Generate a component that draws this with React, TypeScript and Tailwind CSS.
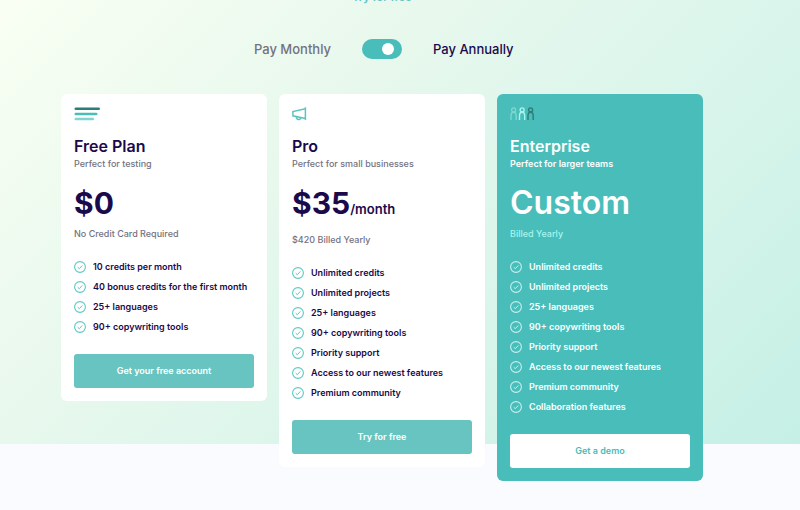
import { useState } from "react";
import type { ReactNode } from "react";

type Plan = {
  name: string;
  tagline: string;
  price: string;
  period?: string;
  billing: string;
  features: string[];
  action: string;
  icon: ReactNode;
  featured?: boolean;
};

function BarsIcon() {
  return (
    <svg width="26" height="14" viewBox="0 0 26 14" aria-hidden="true" strokeWidth="2.6" strokeLinecap="round">
      <path d="M1.8 1.8H24.7" stroke="#2b7d77" />
      <path d="M1.8 7H22.2" stroke="#4abdb9" />
      <path d="M1.8 12H18.7" stroke="#7fd6d0" />
    </svg>
  );
}

function MegaphoneIcon() {
  return (
    <svg width="15" height="14" viewBox="0 0 15 14" aria-hidden="true" fill="none" stroke="#5cc5c0" strokeWidth="1.5">
      <path d="M13.4 0.2V13M13.4 1.7L0.9 4.6V8.8L13.4 11.6" />
      <path d="M4.4 9.8C4.4 13.2 8.6 13.4 8.6 10.8" />
    </svg>
  );
}

function PeopleIcon() {
  return (
    <svg width="26" height="14" viewBox="0 0 26 14" aria-hidden="true" fill="none" strokeWidth="1.4">
      {["#7fd6d0", "#a9f5ee", "#2b7d77"].map((color, i) => (
        <g key={color} stroke={color} transform={`translate(${i * 8.5} 0)`}>
          <circle cx="3.6" cy="2.9" r="2" />
          <path d="M1 13V8.8C1 6.8 2.2 5.2 3.6 5.2S6.2 6.8 6.2 8.8V13" />
        </g>
      ))}
    </svg>
  );
}

function CheckIcon({ featured }: { featured?: boolean }) {
  return (
    <svg
      width="12"
      height="12"
      viewBox="0 0 12 12"
      aria-hidden="true"
      fill="none"
      stroke={featured ? "#c9efec" : "#5cc8c3"}
      className="shrink-0"
    >
      <circle cx="6" cy="6" r="5.4" strokeWidth="1.1" />
      <path d="M3.7 6.2L5.3 7.7L8.3 4.4" strokeWidth="1" />
    </svg>
  );
}

const plans: Plan[] = [
  {
    name: "Free Plan",
    tagline: "Perfect for testing",
    price: "$0",
    billing: "No Credit Card Required",
    features: [
      "10 credits per month",
      "40 bonus credits for the first month",
      "25+ languages",
      "90+ copywriting tools",
    ],
    action: "Get your free account",
    icon: <BarsIcon />,
  },
  {
    name: "Pro",
    tagline: "Perfect for small businesses",
    price: "$35",
    period: "/month",
    billing: "$420 Billed Yearly",
    features: [
      "Unlimited credits",
      "Unlimited projects",
      "25+ languages",
      "90+ copywriting tools",
      "Priority support",
      "Access to our newest features",
      "Premium community",
    ],
    action: "Try for free",
    icon: <MegaphoneIcon />,
  },
  {
    name: "Enterprise",
    tagline: "Perfect for larger teams",
    price: "Custom",
    billing: "Billed Yearly",
    features: [
      "Unlimited credits",
      "Unlimited projects",
      "25+ languages",
      "90+ copywriting tools",
      "Priority support",
      "Access to our newest features",
      "Premium community",
      "Collaboration features",
    ],
    action: "Get a demo",
    icon: <PeopleIcon />,
    featured: true,
  },
];

function PlanCard({ plan }: { plan: Plan }) {
  const { featured } = plan;
  return (
    <article
      className={`flex flex-col rounded-md p-[13px] ${
        featured ? "bg-[#48bdba] text-white" : "bg-white text-[#1b0a4b]"
      }`}
    >
      {plan.icon}
      <h2 className="mt-[14px] text-base leading-[22px] font-semibold">{plan.name}</h2>
      <p className={`text-[9px] leading-[14px] ${featured ? "font-semibold text-white" : "font-medium text-[#73727f]"}`}>
        {plan.tagline}
      </p>
      <p className={`mt-3 leading-10 ${featured ? "text-[32px] font-semibold" : "text-[30px] font-bold"}`}>
        {plan.price}
        {plan.period && <span className="text-[13px] leading-none font-semibold">{plan.period}</span>}
      </p>
      <p
        className={`text-[9px] leading-[14px] font-medium ${plan.period ? "mt-[10px]" : "mt-1"} ${
          featured ? "text-[#a9f5ee]" : "text-[#73727f]"
        }`}
      >
        {plan.billing}
      </p>
      <ul className="mt-4">
        {plan.features.map((feature) => (
          <li key={feature} className="flex h-5 items-center gap-[7px] text-[9px] leading-[14px] font-semibold">
            <CheckIcon featured={featured} />
            {feature}
          </li>
        ))}
      </ul>
      <button
        type="button"
        className={`mt-[17px] h-[34px] rounded-[3px] text-[9px] font-semibold ${
          featured ? "bg-white text-[#48bdba]" : "bg-[#68c4c0] text-white"
        }`}
      >
        {plan.action}
      </button>
    </article>
  );
}

export default function App() {
  const [annual, setAnnual] = useState(true);
  return (
    <main className="min-h-screen bg-[#f9fbff] bg-[linear-gradient(135deg,#f9fff3_0%,#e8f8ed_35%,#d9f5eb_65%,#c5efe5_100%)] bg-[length:100%_444px] bg-no-repeat pr-9 font-['Inter','Liberation_Sans',sans-serif]">
      <div className="flex h-1 items-end justify-center overflow-hidden">
        <a href="#free" className="text-[11px] leading-[14px] font-semibold text-[#68c4c0]">
          Try for free
        </a>
      </div>
      <div className="mt-[35px] grid h-5 grid-cols-[1fr_auto_1fr] items-center gap-[31px] text-[13px] leading-5 font-medium">
        <span className="text-right text-[#73727f]">Pay Monthly</span>
        <input
          id="annual"
          type="checkbox"
          role="switch"
          checked={annual}
          onChange={(event) => setAnnual(event.target.checked)}
          className="flex h-5 w-10 appearance-none items-center rounded-full bg-[#48bdba] px-2 before:size-3 before:rounded-full before:bg-white checked:justify-end"
        />
        <label htmlFor="annual" className="text-[#1b0a4b]">
          Pay Annually
        </label>
      </div>
      <section className="mx-auto mt-[35px] grid max-w-[642px] grid-cols-3 items-start gap-3">
        {plans.map((plan) => (
          <PlanCard key={plan.name} plan={plan} />
        ))}
      </section>
    </main>
  );
}
